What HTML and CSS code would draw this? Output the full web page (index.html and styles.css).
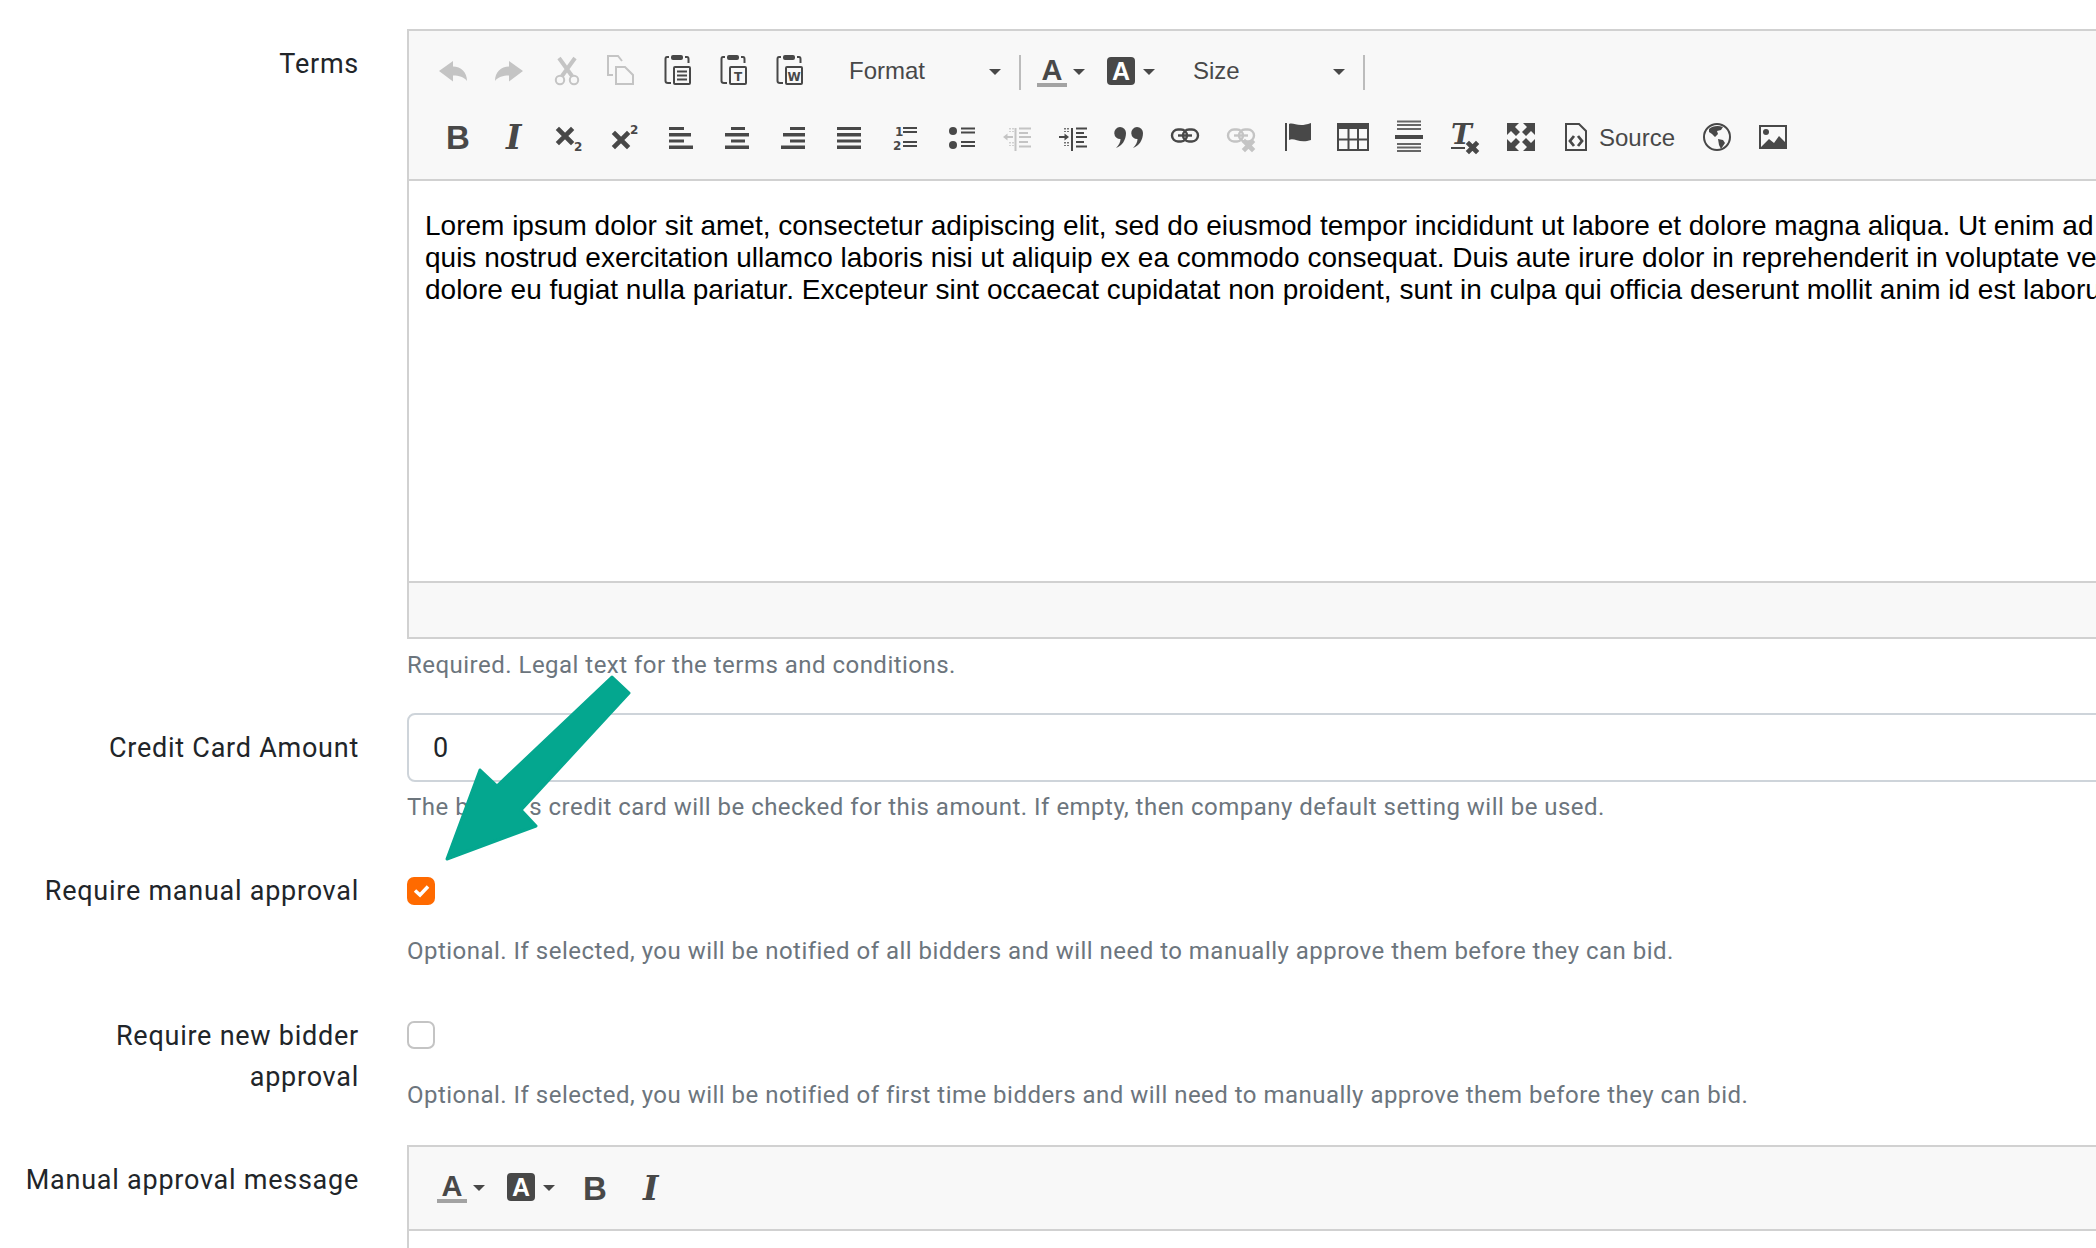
FILE: index.html
```html
<!DOCTYPE html>
<html>
<head>
  <title>Auction Settings</title>
  <link rel="stylesheet" href="styles.css">
</head>
<body>
  <div class="page">
    <div class="form-row row-editor">
      <label class="form-label">Terms</label>
      <div class="form-field">
        <div class="editor">
          <div class="toolbar">
            <div class="tool-row">
              <span class="btn disabled"><svg viewBox="0 0 28 28"><path d="M0 13L14 3V8.5C22 8.5 28 14 28 23C25 19 20 17.5 14 17.5V23.5Z"/></svg></span>
              <span class="btn disabled"><svg viewBox="0 0 28 28"><path d="M28 13L14 3V8.5C6 8.5 0 14 0 23C3 19 8 17.5 14 17.5V23.5Z"/></svg></span>
              <span class="btn disabled"><svg viewBox="0 0 28 28"><path class="line thick" d="M8 0L21 18M24 0L11 18"/><circle class="line" cx="9" cy="22" r="4.2"/><circle class="line" cx="23" cy="22" r="4.2"/></svg></span>
              <span class="btn disabled"><svg viewBox="0 0 28 28"><path class="line" d="M6 17H1V-2H11L15 3M9 9H18L26 17V26H9Z"/></svg></span>
              <span class="btn"><svg viewBox="0 0 28 28"><path class="line" d="M6 -1H4Q2.5 -1 2.5 1V23Q2.5 25 5 25H8M22 -1H24Q25.5 -1 25.5 1V5"/><rect x="8" y="-3" width="12" height="5" rx="2"/><rect class="line" x="11" y="9" width="16" height="17" rx="1"/><path class="line" d="M14 13.500H24M14 17.500H24M14 21.500H24"/></svg></span>
              <span class="btn"><svg viewBox="0 0 28 28"><path class="line" d="M6 -1H4Q2.5 -1 2.5 1V23Q2.500 25 5 25H8M22 -1H24Q25.5 -1 25.5 1V5"/><rect x="8" y="-3" width="12" height="5" rx="2"/><rect class="line" x="11" y="9" width="16" height="17" rx="1"/><text class="tiny" x="19" y="22.500" text-anchor="middle">T</text></svg></span>
              <span class="btn"><svg viewBox="0 0 28 28"><path class="line" d="M6 -1H4Q2.5 -1 2.5 1V23Q2.500 25 5 25H8M22 -1H24Q25.5 -1 25.5 1V5"/><rect x="8" y="-3" width="12" height="5" rx="2"/><rect class="line" x="11" y="9" width="16" height="17" rx="1"/><text class="tiny" x="19" y="22.500" text-anchor="middle">W</text></svg></span>
              <span class="combo combo-format">Format<i class="caret"></i></span>
              <span class="sep"></span>
              <span class="btn-color"><svg viewBox="0 0 30 28"><text class="letter" x="15" y="22" text-anchor="middle">A</text><rect class="underline" x="0" y="25" width="30" height="4"/></svg><i class="caret"></i></span>
              <span class="btn-color bg"><svg viewBox="0 0 28 28"><rect x="0" y="-1" width="28" height="28" rx="4"/><text class="letter-bg" x="14" y="21.500" text-anchor="middle">A</text></svg><i class="caret"></i></span>
              <span class="combo combo-size">Size<i class="caret"></i></span>
              <span class="sep"></span>
            </div>
            <div class="tool-row">
              <span class="btn"><svg viewBox="0 0 28 28"><text class="icon-bold" x="7" y="26">B</text></svg></span>
              <span class="btn"><svg viewBox="0 0 28 28"><text class="icon-italic" x="11" y="26">I</text></svg></span>
              <span class="btn"><svg viewBox="0 0 28 28"><path class="line cross" d="M8 7L20 19M20 7L8 19"/><text class="tiny" x="23" y="28">2</text></svg></span>
              <span class="btn"><svg viewBox="0 0 28 28"><path class="line cross" d="M8 11L20 23M20 11L8 23"/><text class="tiny" x="23" y="11">2</text></svg></span>
              <span class="btn"><svg viewBox="0 0 28 28"><path d="M6 4h15v3H6zM6 10h22v3.500H6zM6 16.500h15v3H6zM6 22.500h24V26H6z"/></svg></span>
              <span class="btn"><svg viewBox="0 0 28 28"><path d="M12 4h14v3H12zM6 10h24v3.500H6zM12 16.500h14v3H12zM6 22.500h24V26H6z"/></svg></span>
              <span class="btn"><svg viewBox="0 0 28 28"><path d="M15 4h15v3H15zM8 10h22v3.500H8zM15 16.500h15v3H15zM6 22.500h24V26H6z"/></svg></span>
              <span class="btn"><svg viewBox="0 0 28 28"><path d="M6 4h24v3H6zM6 10h24v3.500H6zM6 16.500h24v3H6zM6 22.500h24V26H6z"/></svg></span>
              <span class="btn"><svg viewBox="0 0 28 28"><text class="tiny" x="8" y="13">1</text><text class="tiny" x="6" y="27">2</text><path class="line" d="M16 5H30M16 9H30M16 19H30M16 23H30"/></svg></span>
              <span class="btn"><svg viewBox="0 0 28 28"><circle cx="10" cy="8" r="4"/><circle cx="10" cy="22" r="4"/><path class="line" d="M18 5.500H32M18 9.500H32M18 19H32M18 23H32"/></svg></span>
              <span class="btn disabled"><svg viewBox="0 0 28 28"><path class="line" d="M16.500 5V28M20 5.500H32M20 10H29M20 14H32M20 19H29M20 23.500H32M14 14H6"/><path d="M4 14L8.500 10.500V17.500Z"/><path class="dots" d="M11 5V9M11 19V23M14 5V9M14 19V23"/></svg></span>
              <span class="btn"><svg viewBox="0 0 28 28"><path class="line" d="M17 5V28M21 5.500H32M21 10H29M21 14H32M21 19H29M21 23.500H32M4 14H11"/><path d="M14 14L9.500 10.500V17.500Z"/><path class="dots" d="M10 5V9M10 19V23M13 5V9M13 19V23"/></svg></span>
              <span class="btn"><svg viewBox="0 0 28 28"><path d="M9 4A6 6 0 0 1 15 10C15 17 11 23 5 25C8 22 9.500 19 9.500 16A6 6 0 0 1 9 4ZM26 4A6 6 0 0 1 32 10C32 17 28 23 22 25C25 22 26.500 19 26.500 16A6 6 0 0 1 26 4Z"/></svg></span>
              <span class="btn"><svg viewBox="0 0 28 28"><rect class="line chain" x="5" y="6.500" width="15" height="12" rx="6"/><rect class="line chain" x="16" y="6.500" width="15" height="12" rx="6"/><path class="line chain" d="M11 12.500H25"/></svg></span>
              <span class="btn disabled"><svg viewBox="0 0 28 28"><rect class="line chain" x="5" y="6.500" width="15" height="12" rx="6"/><rect class="line chain" x="16" y="6.500" width="15" height="12" rx="6"/><path class="line chain" d="M11 12.500H25"/><path class="line cross" d="M22 19L29 26M29 19L22 26"/></svg></span>
              <span class="btn"><svg viewBox="0 0 28 28"><path d="M6 0h2v28H6zM10 1C15 -1 19 5 32 0V17C20 21 15 14 10 17Z"/></svg></span>
              <span class="btn"><svg viewBox="0 0 28 28"><path d="M2 0H34V6H2Z"/><path class="line" d="M3 5H33V27H3ZM13.500 5V27M23 5V27M3 16.500H33"/></svg></span>
              <span class="btn"><svg viewBox="0 0 28 28"><path d="M4 12H32V16H4Z"/><path class="hr" d="M6 -1.500H30M6 2H30M6 6H30M6 21H30M6 24.500H30M6 28H30"/></svg></span>
              <span class="btn"><svg viewBox="0 0 28 28"><text class="icon-tx" x="4" y="21">T</text><path class="line" d="M4 25H18"/><path class="line cross" d="M22 21L29 28M29 21L22 28"/></svg></span>
              <span class="btn"><svg viewBox="0 0 28 28"><path d="M4 0H16L12 4L17 9L13 13L8 8L4 12ZM32 0H20L24 4L19 9L23 13L28 8L32 12ZM4 28H16L12 24L17 19L13 15L8 20L4 16ZM32 28H20L24 24L19 19L23 15L28 20L32 16Z"/></svg></span>
              <span class="btn-source"><svg viewBox="0 0 28 28"><path class="line" d="M7 1H20L27 8V27H7Z"/><path class="line thick-sm" d="M15 13L11 18L15 23M19 13L23 18L19 23"/></svg><span class="source-text">Source</span></span>
              <span class="btn"><svg viewBox="0 0 28 28"><circle class="line" cx="14" cy="14" r="13"/><path d="M6 6C9 3 15 2 20 4L18 7L14 8L15 11L12 14L9 11L6 9ZM15 16L20 17L22 20L18 26L16 22Z"/></svg></span>
              <span class="btn"><svg viewBox="0 0 28 28"><rect class="line" x="1" y="3" width="26" height="22"/><circle cx="7" cy="9" r="3"/><path d="M1 25L10 16L15 20L20 13L27 20V25Z"/></svg></span>
            </div>
          </div>
          <div class="edit-area">
            Lorem ipsum dolor sit amet, consectetur adipiscing elit, sed do eiusmod tempor incididunt ut labore et dolore magna aliqua. Ut enim ad minim veniam, quis nostrud exercitation ullamco laboris nisi ut aliquip ex ea commodo consequat. Duis aute irure dolor in reprehenderit in voluptate velit esse cillum dolore eu fugiat nulla pariatur. Excepteur sint occaecat cupidatat non proident, sunt in culpa qui officia deserunt mollit anim id est laborum.
          </div>
          <div class="status-bar"></div>
        </div>
        <p class="help">Required. Legal text for the terms and conditions.</p>
      </div>
    </div>

    <div class="form-row row-input">
      <label class="form-label">Credit Card Amount</label>
      <div class="form-field">
        <input class="text-input" type="text" value="0">
        <p class="help help-input">The bidder's credit card will be checked for this amount. If empty, then company default setting will be used.</p>
      </div>
    </div>

    <div class="form-row">
      <label class="form-label">Require manual approval</label>
      <div class="form-field check-field check-first">
        <span class="checkbox checked"><svg viewBox="0 0 28 28"><path d="M8 13.500L13 18L21 9.500"/></svg></span>
        <p class="help help-check">Optional. If selected, you will be notified of all bidders and will need to manually approve them before they can bid.</p>
      </div>
    </div>

    <div class="form-row">
      <label class="form-label">Require new bidder approval</label>
      <div class="form-field check-field">
        <span class="checkbox"></span>
        <p class="help help-check">Optional. If selected, you will be notified of first time bidders and will need to manually approve them before they can bid.</p>
      </div>
    </div>

    <div class="form-row">
      <label class="form-label">Manual approval message</label>
      <div class="form-field">
        <div class="editor">
          <div class="toolbar toolbar-small">
            <div class="tool-row">
              <span class="btn-color"><svg viewBox="0 0 30 28"><text class="letter" x="15" y="22" text-anchor="middle">A</text><rect class="underline" x="0" y="25" width="30" height="4"/></svg><i class="caret"></i></span>
              <span class="btn-color bg"><svg viewBox="0 0 28 28"><rect x="0" y="-1" width="28" height="28" rx="4"/><text class="letter-bg" x="14" y="21.500" text-anchor="middle">A</text></svg><i class="caret"></i></span>
              <span class="btn btn-b"><svg viewBox="0 0 28 28"><text class="icon-bold" x="7" y="26">B</text></svg></span>
              <span class="btn"><svg viewBox="0 0 28 28"><text class="icon-italic" x="11" y="26">I</text></svg></span>
            </div>
          </div>
          <div class="edit-area"></div>
        </div>
      </div>
    </div>

    <svg class="callout" viewBox="0 0 200 200"><polygon points="172,7 189,23 81,140 96,156 7,189 40,100 57,116"/></svg>
  </div>
</body>
</html>
```

FILE: styles.css
```css
body {
  font-family: Roboto, Arial, sans-serif;
  background-color: #fff;
  margin: 0;
  padding: 0;
  overflow: hidden;
  height: 1248px;
}

.page {
  position: relative;
  width: 2340px;
  padding-top: 29px;
}

.form-row {
  display: flex;
  margin-bottom: 34px;
}

.row-editor {
  margin-bottom: 32px;
}

.row-input {
  margin-bottom: 33px;
}

.form-label {
  box-sizing: border-box;
  width: 359px;
  padding: 15px 0 0 20px;
  margin-right: 48px;
  text-align: right;
  font-size: 27px;
  line-height: 41px;
  letter-spacing: 0.75px;
  color: #212529;
  flex-shrink: 0;
}

.form-field {
  flex: 1;
}

.check-field {
  padding-top: 20px;
}

.check-first {
  padding-top: 21px;
}

.help {
  margin: 10px 0 0;
  font-size: 24px;
  line-height: 32px;
  letter-spacing: 0.48px;
  color: #6c757d;
}

.help-input {
  margin-top: 9px;
}

.help-check {
  margin-top: 30px;
}

/* Editor */
.editor {
  border: 2px solid #d1d1d1;
  color: #484848;
}

.toolbar {
  background-color: #f8f8f8;
  border-bottom: 2px solid #d1d1d1;
  padding: 27px 0 28px 30px;
  height: 93px;
}

.toolbar-small {
  padding: 27px 0 27px 28px;
  height: 28px;
}

.tool-row {
  display: flex;
  align-items: center;
  height: 28px;
  margin-bottom: 37px;
}

.btn {
  display: block;
  width: 28px;
  height: 28px;
  margin-right: 28px;
  flex-shrink: 0;
}

.btn.disabled {
  color: #c4c4c4;
}

.btn svg,
.btn-color svg,
.btn-source svg {
  display: block;
  width: 28px;
  height: 28px;
  overflow: visible;
  fill: currentColor;
}

.btn-color {
  display: flex;
  align-items: center;
  flex-shrink: 0;
  margin-right: 22px;
}

.btn-color svg {
  width: 30px;
}

.btn-color.bg svg {
  width: 28px;
}

.btn-color .caret {
  margin-left: 6px;
}

.btn-color.bg {
  margin-right: 38px;
}

.btn-color.bg .caret {
  margin-left: 8px;
}

.toolbar-small .btn-color.bg {
  margin-right: 21px;
}

.btn-source {
  display: flex;
  align-items: center;
  width: 144px;
  flex-shrink: 0;
}

.source-text {
  margin: 2px 0 0 12px;
  font-family: "Liberation Sans", Arial, sans-serif;
  font-size: 24px;
}

.combo {
  display: flex;
  align-items: center;
  justify-content: space-between;
  flex-shrink: 0;
  margin-right: 18px;
  padding-bottom: 2px;
  font-family: "Liberation Sans", Arial, sans-serif;
  font-size: 24px;
  line-height: 28px;
}

.combo-format {
  width: 152px;
  margin-left: 18px;
}

.combo-size {
  width: 152px;
}

.combo .caret {
  margin-top: 2px;
}

.caret {
  display: block;
  width: 0;
  height: 0;
  border-left: 6px solid transparent;
  border-right: 6px solid transparent;
  border-top: 6px solid #484848;
}

.sep {
  width: 2px;
  height: 35px;
  background-color: #bcbcbc;
  margin-right: 16px;
  flex-shrink: 0;
}

/* icon parts */
.line {
  fill: none;
  stroke: currentColor;
  stroke-width: 2;
}

.thick {
  stroke-width: 4;
}

.thick-sm {
  stroke-width: 2.8;
}

.cross {
  stroke-width: 4.6;
  stroke-linecap: square;
}

.chain {
  stroke-width: 2.4;
}

.dots {
  fill: none;
  stroke: currentColor;
  stroke-width: 1.5;
  stroke-dasharray: 1.5 1.5;
}

.hr {
  fill: none;
  stroke: #666;
  stroke-width: 1.8;
}

.tiny {
  font-family: "DejaVu Sans", sans-serif;
  font-weight: bold;
  font-size: 12px;
}

.letter {
  font-family: "Liberation Sans", sans-serif;
  font-weight: bold;
  font-size: 29px;
}

.letter-bg {
  font-family: "Liberation Sans", sans-serif;
  font-weight: bold;
  font-size: 25px;
  fill: #fff;
}

.underline {
  fill: #a3a3a3;
}

.icon-bold {
  font-family: "Liberation Sans", sans-serif;
  font-weight: bold;
  font-size: 33px;
}

.icon-italic {
  font-family: "DejaVu Serif", serif;
  font-weight: bold;
  font-style: italic;
  font-size: 33px;
}

.icon-tx {
  font-family: "DejaVu Serif", serif;
  font-weight: bold;
  font-style: italic;
  font-size: 28px;
}

.edit-area {
  height: 371px;
  padding: 29px 33px 0 16px;
  font-family: "Liberation Sans", Arial, sans-serif;
  font-size: 28px;
  line-height: 32px;
  color: #000;
  background-color: #fff;
}

.status-bar {
  height: 54px;
  background-color: #f8f8f8;
  border-top: 2px solid #d1d1d1;
}

.text-input {
  display: block;
  box-sizing: border-box;
  width: 100%;
  height: 69px;
  padding: 0 24px;
  font-family: Roboto, Arial, sans-serif;
  font-size: 27px;
  color: #212529;
  border: 2px solid #ced4da;
  border-radius: 8px;
  outline: none;
}

.checkbox {
  display: block;
  box-sizing: border-box;
  width: 28px;
  height: 28px;
  border: 2px solid #c4c4c4;
  border-radius: 7px;
  background-color: #fff;
}

.checkbox.checked {
  border: none;
  background-color: #ff6a00;
}

.checkbox svg {
  display: block;
  fill: none;
  stroke: #fff;
  stroke-width: 3.5;
}

.callout {
  position: absolute;
  left: 440px;
  top: 670px;
  width: 200px;
  height: 200px;
  fill: #04a78f;
  stroke: #04a78f;
  stroke-width: 3;
  stroke-linejoin: round;
}
```
